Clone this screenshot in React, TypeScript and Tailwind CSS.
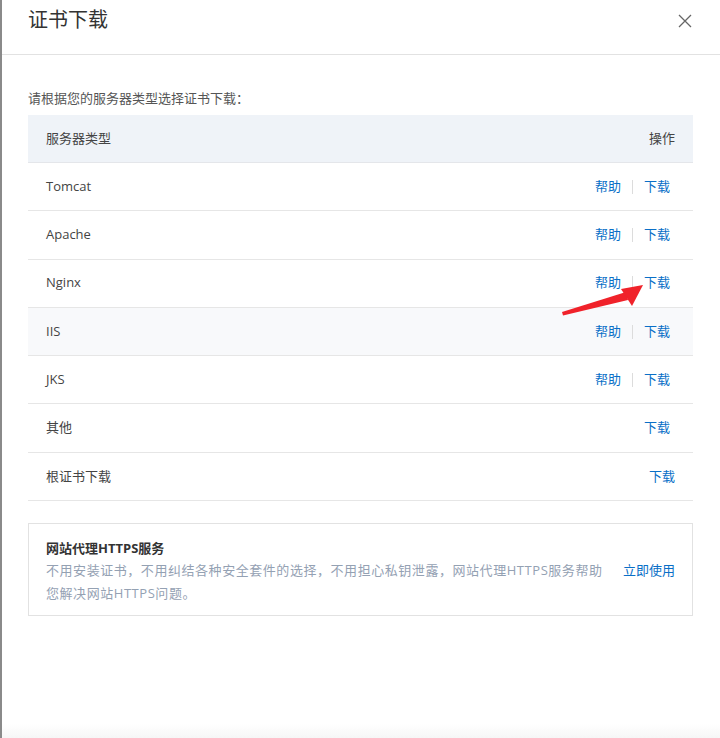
import React from "react";

const rows: { name: string; help: boolean; root?: boolean; shaded?: boolean }[] = [
  { name: "Tomcat", help: true },
  { name: "Apache", help: true },
  { name: "Nginx", help: true },
  { name: "IIS", help: true, shaded: true },
  { name: "JKS", help: true },
  { name: "其他", help: false },
  { name: "根证书下载", help: false, root: true },
];

export default function App() {
  return (
    <div
      className="relative w-[720px] h-[738px] bg-white overflow-hidden border-l-2 border-[#8a8a8a]"
      style={{ fontFamily: '"Open Sans", "Noto Sans CJK SC", sans-serif' }}
    >
      {/* header */}
      <div className="h-[55px] border-b border-[#e2e2e2] flex items-start justify-between pl-[26px] pr-[28px] pt-[6px]">
        <div className="text-[20px] leading-[28px] text-[#333]">证书下载</div>
        <svg width="14" height="14" viewBox="0 0 14 14" className="mt-[8px]">
          <path d="M1 1 L13 13 M13 1 L1 13" stroke="#666" strokeWidth="1.3" fill="none" />
        </svg>
      </div>

      {/* body */}
      <div className="pl-[26px] pr-[27px] pt-[34px]">
        <div className="text-[13px] leading-[18px] text-[#555]">请根据您的服务器类型选择证书下载：</div>
        <div className="mt-[8px] text-[13px] text-[#444]">
          <div className="h-[48px] bg-[#eff3f8] border-b border-[#e4e6ea] flex items-center justify-between pl-[18px] pr-[18px]">
            <span>服务器类型</span>
            <span>操作</span>
          </div>
          {rows.map((r) => (
            <div
              key={r.name}
              className={`h-[48.3px] border-b border-[#e6e6e6] flex items-center justify-between pl-[18px] ${
                r.root ? "pr-[18px]" : "pr-[23px]"
              } ${r.shaded ? "bg-[#f8f9fb]" : ""}`}
            >
              <span>{r.name}</span>
              <div className="flex items-center text-[#0a6fc7]">
                {r.help && (
                  <>
                    <span>帮助</span>
                    <span className="mx-[11px] w-px h-[14px] bg-[#dcdcdc]" />
                  </>
                )}
                <span>下载</span>
              </div>
            </div>
          ))}
        </div>

        {/* card */}
        <div className="mt-[22px] border border-[#e2e2e2] pl-[17px] pr-[17px] pt-[13px] pb-[10px]">
          <div className="text-[13px] leading-[22px] font-bold text-[#333]">网站代理HTTPS服务</div>
          <div className="flex items-start justify-between">
            <div className="text-[13px] leading-[23px] text-[#94a1b3] tracking-[0.55px]">
              不用安装证书，不用纠结各种安全套件的选择，不用担心私钥泄露，网站代理HTTPS服务帮助
              <br />
              您解决网站HTTPS问题。
            </div>
            <span className="text-[13px] leading-[23px] text-[#0a6fc7] shrink-0">立即使用</span>
          </div>
        </div>
      </div>

      {/* bottom fade */}
      <div className="absolute left-0 right-0 bottom-0 h-[14px] bg-gradient-to-b from-white to-[#f6f6f6]" />

      {/* red arrow annotation */}
      <svg className="absolute left-0 top-0 pointer-events-none" width="720" height="738">
        <polygon points="560,312 561,315.5 626,300 624,292" fill="#f0222a" />
        <polygon points="641,285 619,289 630,306" fill="#f0222a" />
      </svg>
    </div>
  );
}
